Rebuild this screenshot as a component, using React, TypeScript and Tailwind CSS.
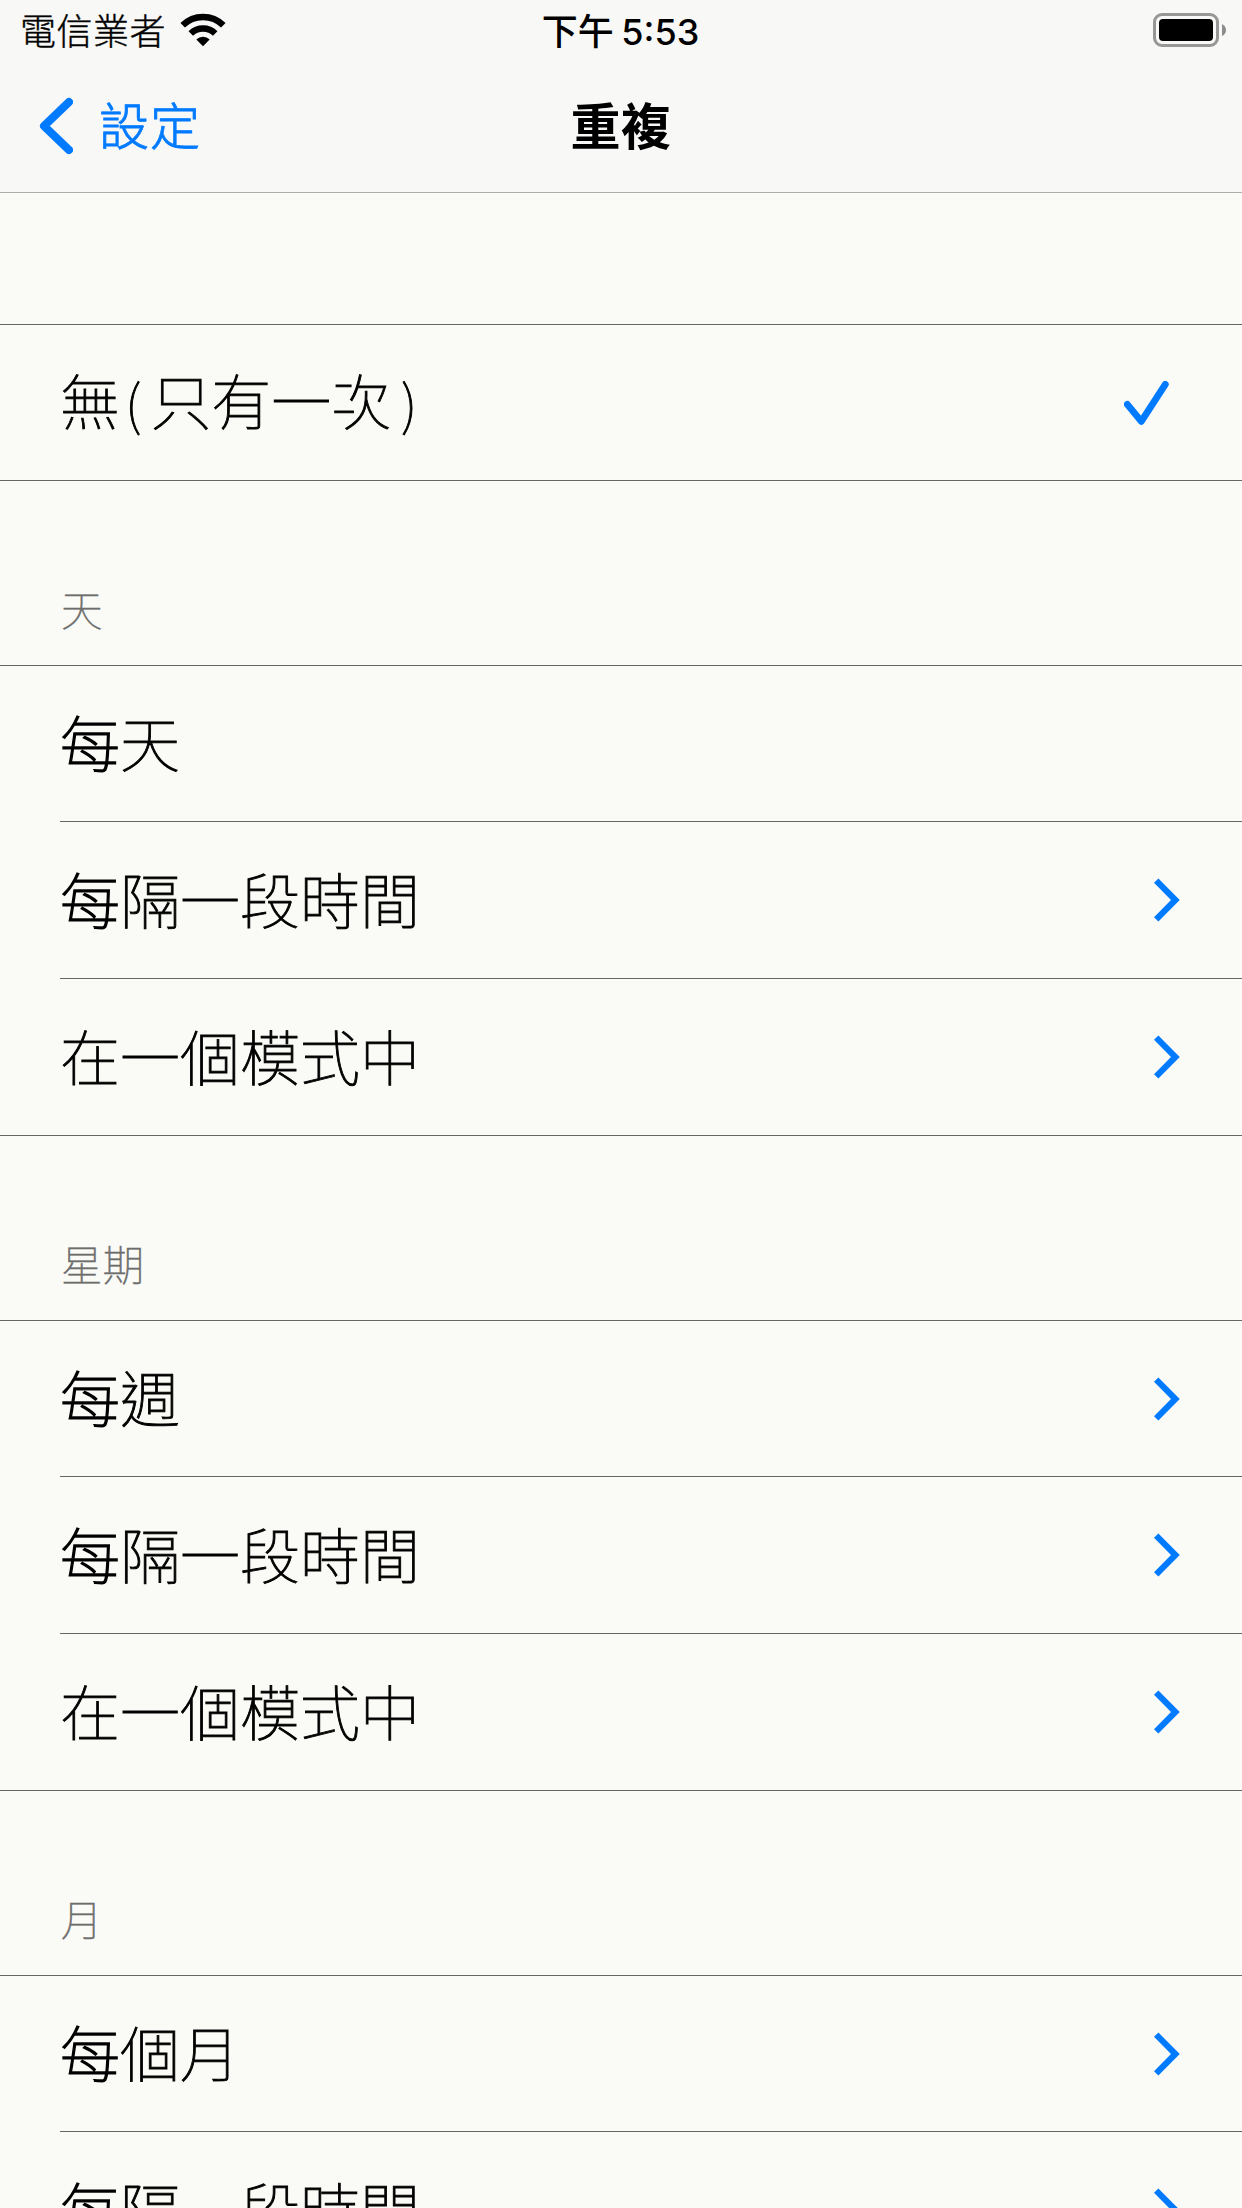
type RowIcon = "check" | "chevron" | null;

interface Row {
    label: string;
    icon: RowIcon;
    height: string;
}

interface Section {
    id: number;
    title: string;
    rows: Row[];
}

const sections: Section[] = [
    {
        id: 1,
        title: "",
        rows: [{ label: "無(只有一次)", icon: "check", height: "h-[156px]" }],
    },
    {
        id: 2,
        title: "天",
        rows: [
            { label: "每天", icon: null, height: "h-[156px]" },
            { label: "每隔一段時間", icon: "chevron", height: "h-[157px]" },
            { label: "在一個模式中", icon: "chevron", height: "h-[157px]" },
        ],
    },
    {
        id: 3,
        title: "星期",
        rows: [
            { label: "每週", icon: "chevron", height: "h-[156px]" },
            { label: "每隔一段時間", icon: "chevron", height: "h-[157px]" },
            { label: "在一個模式中", icon: "chevron", height: "h-[157px]" },
        ],
    },
    {
        id: 4,
        title: "月",
        rows: [
            { label: "每個月", icon: "chevron", height: "h-[156px]" },
            { label: "每隔一段時間", icon: "chevron", height: "h-[157px]" },
        ],
    },
];

// Extra weight or spacing for single characters of a label
const charStyles: Record<string, string> = {
    每: "[-webkit-text-stroke:1.4px_black]",
    "(": "pl-[5px] pr-[10px] text-[54px]",
    ")": "pl-[10px] text-[54px]",
};

const Label = ({ text }: { text: string }) => (
    <span className="pb-[5px] text-[60px]/[88px] font-thin [-webkit-text-stroke:0.9px_black]">
        {text.split(/([每()])/).map((part, key) =>
            charStyles[part] ? (
                <span className={charStyles[part]} key={key}>
                    {part}
                </span>
            ) : (
                part
            )
        )}
    </span>
);

const Wifi = () => (
    <svg className="-mt-1 ml-[14px] h-[34px] w-[46px]" viewBox="0 0 46 34" fill="none">
        <path d="M2.7 12.3 A29 29 0 0 1 43.3 12.3" stroke="#000" strokeWidth="6.4" />
        <path d="M10.8 20.6 A17.3 17.3 0 0 1 35.2 20.6" stroke="#000" strokeWidth="6.4" />
        <path d="M23 33.2 L16.3 26.4 A9.6 9.6 0 0 1 29.7 26.4 Z" fill="#000" />
    </svg>
);

const Battery = () => (
    <svg className="-mt-1 h-[34px] w-[74px]" viewBox="0 0 74 34" fill="none">
        <rect x="1.5" y="1.5" width="63" height="31" rx="7.5" stroke="#979797" strokeWidth="3" />
        <rect x="6" y="6" width="54" height="22" rx="4" fill="#000" />
        <path d="M69 11 Q73 13 73 17 Q73 21 69 23 Z" fill="#8c8c8c" />
    </svg>
);

const Chevron = () => (
    <svg className="mr-[62px] h-11 w-[26px]" viewBox="0 0 26 44" fill="none">
        <path d="M2.2 2.6 L21.4 22 L2.2 41.4" stroke="#007aff" strokeWidth="6.2" />
    </svg>
);

const Check = () => (
    <svg className="mr-[73px] h-11 w-[45px]" viewBox="0 0 45 44" fill="none">
        <path d="M3.3 23.4 L17.3 40.4 L41.3 3.4" stroke="#007aff" strokeWidth="6.8" strokeLinecap="round" strokeLinejoin="round" />
    </svg>
);

const Header = () => (
    <header className="h-[193px] border-b border-[#adadab] bg-[#f8f8f7]">
        <div className="grid h-16 grid-cols-[1fr_auto_1fr] items-center font-['Inter','Noto_Sans_CJK_TC',sans-serif]">
            <div className="flex items-center pl-5 text-[36px]/[52px] font-light">
                <span className="tracking-[0.5px] [-webkit-text-stroke:0.4px_black]">電信業者</span>
                <Wifi />
            </div>
            <div className="pr-px text-[36px]/[52px] font-medium [word-spacing:-2px]">下午 5:53</div>
            <div className="flex justify-end pr-[15px]">
                <Battery />
            </div>
        </div>
        <div className="grid h-32 grid-cols-[1fr_auto_1fr] items-center pb-1 font-['Noto_Sans_CJK_TC',sans-serif] text-[50px]/[74px]">
            <div className="flex items-center pl-[39px] text-[#007aff]">
                <svg className="h-[58px] w-[34px]" viewBox="0 0 34 58" fill="none">
                    <path d="M30 5 L5 29 L30 53" stroke="#007aff" strokeWidth="8" strokeLinecap="round" strokeLinejoin="round" />
                </svg>
                <span className="ml-[26px] pb-[7px] font-light tracking-[1px] [-webkit-text-stroke:0.8px_#007aff]">設定</span>
            </div>
            <h1 className="pb-[7px] font-bold tracking-[0.5px]">重複</h1>
            <div />
        </div>
    </header>
);

const App = () => {
    return (
        <main className="h-[2208px] w-[1242px] overflow-hidden bg-[#fafbf6] font-['Noto_Sans_CJK_TC',sans-serif] text-black">
            <Header />
            {sections.map((section) => (
                <section key={section.id}>
                    {section.title ? (
                        <h2 className="flex h-[184px] items-end pb-[27px] pl-[61px] text-[41.5px]/[60px] font-thin text-[#6d6d6d] [-webkit-text-stroke:0.6px_#6d6d6d]">
                            {section.title}
                        </h2>
                    ) : (
                        <div className="h-[131px]" />
                    )}
                    <ul className="border-t border-[#666663]">
                        {section.rows.map((row, key) => {
                            // The last row of a group has a full-width separator
                            const isLast = key === section.rows.length - 1;
                            return (
                                <li key={key} className={isLast ? "" : "pl-[60px]"}>
                                    <div className={`${row.height} ${isLast ? "pl-[60px]" : ""} flex items-center justify-between border-b border-[#666663]`}>
                                        <Label text={row.label} />
                                        {row.icon === "chevron" && <Chevron />}
                                        {row.icon === "check" && <Check />}
                                    </div>
                                </li>
                            );
                        })}
                    </ul>
                </section>
            ))}
        </main>
    );
};

export default App;
